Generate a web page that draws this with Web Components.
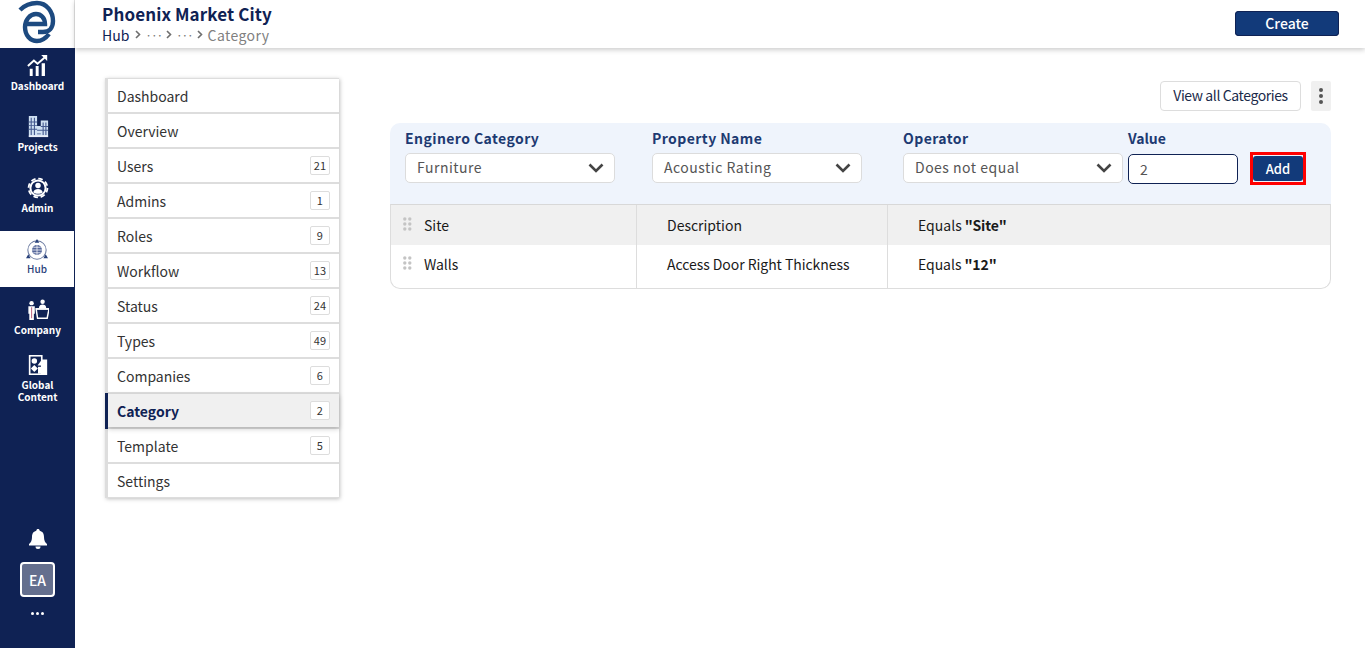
<!DOCTYPE html>
<html lang=en>
<title>Category</title>
<meta charset=utf-8>
<style>
html,body {margin:0; height:100%; overflow:hidden; background:#fff;}
body {font-family:"Noto Sans CJK JP","Liberation Sans",sans-serif; color:#1a1a1a;}
</style>
<app-shell>
  <side-bar slot=side></side-bar>
  <top-bar slot=top title-text="Phoenix Market City"></top-bar>
  <hub-menu slot=menu></hub-menu>
  <category-panel slot=panel></category-panel>
</app-shell>
<script>
const FONT = `"Noto Sans CJK JP","Liberation Sans",sans-serif`;

customElements.define('app-shell', class extends HTMLElement {
    constructor() {
        super();
        this.attachShadow({mode:'open'}).innerHTML = `
        <style>
        :host {display:grid; grid-template-columns:75px 1fr; grid-template-rows:48px 1fr; height:648px; width:1365px;}
        .side {grid-row:1 / 3;}
        .top {position:relative; z-index:2;}
        .body {display:flex; align-items:flex-start; padding:30px 34px 0 30px; gap:51px;}
        </style>
        <div class=side><slot name=side></slot></div>
        <div class=top><slot name=top></slot></div>
        <div class=body><slot name=menu></slot><slot name=panel></slot></div>`;
    }
});

// label, item height, padding-top, icon
const NAV = [
    ['Dashboard', 61, 7, `<path d="M1 12 7.500 6l4 3.500L19 3" fill="none" stroke="#fff" stroke-width="2.200"/><path d="M15.500 0H22v6.500z" fill="#fff"/><path d="M3 15h3.200v8H3zM9.500 12h3.200v11H9.500zM16 9h3.600v14H16z" fill="#fff"/>`],
    ['Projects', 61, 7, `<path d="M2 0h9v23H2zM11 11h4v12h-4zM15 5h8v18h-8z" fill="#cfe0f2"/><path d="M4 2h1.200v19H4zM7.500 2h1.200v19H7.500zM17 7h1.200v14H17zM20 7h1.200v14H20zM2 6h9v1H2zM2 10h9v1H2zM2 14h9v1H2zM15 11h8v1h-8zM15 15h8v1h-8zM11 15h4v1h-4zM11 19h4v1h-4z" fill="#44598f"/><path d="M2 21h21v2H2z" fill="#e9eef8"/>`],
    ['Admin', 61, 7, `<circle cx="12" cy="12" r="10.300" fill="none" stroke="#fff" stroke-width="2" stroke-dasharray="5 3.090"/><circle cx="12" cy="12" r="8.300" fill="none" stroke="#fff" stroke-width="2.200"/><circle cx="12" cy="9.300" r="3" fill="#fff"/><path d="M6.800 16.500c.8-2.500 2.800-3.500 5.200-3.500s4.400 1 5.200 3.500c-2.800 2.200-7.600 2.200-10.400 0z" fill="#fff"/>`],
    ['Hub', 56, 8, `<circle cx="12" cy="12" r="10" fill="none" stroke="#6b7aa0" stroke-width="1.100"/><circle cx="12" cy="12" r="5.500" fill="#54669a"/><path d="M6.500 12h11M12 6.500v11M8 9h8M8 15h8" stroke="#fff" stroke-width=".8"/><path d="M12 0l2.500 4h-5zM0 21l2.500-4.500L5 21zM19 21l2.500-4.500L24 21z" fill="#27407a"/>`],
    ['Company', 61, 12, `<circle cx="5" cy="4.500" r="2.400" fill="#fff"/><path d="M1.500 8h7v8H7.500v7h-5v-7h-1z" fill="#fff"/><path d="M4.400 9h1.200v12H4.400z" fill="#c2708a"/><path d="M10 11h14l-2 10H11.500z" fill="none" stroke="#fff" stroke-width="1.600"/><circle cx="17" cy="3" r="2.400" fill="#fff"/><path d="M13 10c0-3 2-4 4-4s4 1 4 4z" fill="#fff"/><path d="M9.500 10h14.500v1.500H9.500z" fill="#fff"/>`],
    ['Global<br>Content', 0, 6, `<path d="M2 1h15v5h5v17H2z" fill="#fff"/><path d="M3.800 2.800h11.400v18.400H3.800z" fill="#0f2254"/><circle cx="8" cy="7.500" r="3" fill="#fff"/><path d="M8 12l3.800 3.800L8 19.600l-3.800-3.800z" fill="#fff"/><path d="M15.500 7l4 5.500h-8z" fill="#fff"/><path d="M12 14h8.500v7.500H12z" fill="#fff"/>`]
];
customElements.define('side-bar', class extends HTMLElement {
    constructor() {
        super();
        const items = NAV.map(([t,h,p,svg]) => `
            <a class="item ${t=='Hub'?'on':''}" style="padding-top:${p}px;${h?`height:${h}px`:''}">
              <svg width=22 height=22 viewBox="0 0 24 24">${svg}</svg><span>${t}</span></a>`).join('');
        this.attachShadow({mode:'open'}).innerHTML = `
        <style>
        :host {display:flex; flex-direction:column; height:648px; background:#0f2254; color:#fff; font:700 10px/12px ${FONT};}
        .logo {height:48px; background:#fff; border-right:1px solid #e3e3e3; box-sizing:border-box;}
        .logo svg {display:block;}
        .item {display:flex; flex-direction:column; align-items:center; text-align:center; box-sizing:border-box; gap:3px;}
        .item span {display:block;}
        .item.on {background:#fff; color:#27407a; font-weight:500; margin-right:1px; gap:2px;}
        .grow {flex:1;}
        .foot {display:flex; flex-direction:column; align-items:center; padding-bottom:33px;}
        .ea {width:31px; height:31px; margin-top:12px; border:2px solid #fff; border-radius:4px; background:#646f8e; display:flex; align-items:center; justify-content:center; font:500 14px/1 ${FONT};}
        .dots {display:flex; gap:2px; margin-top:15px;}
        .dots i {width:3px; height:3px; border-radius:50%; background:#fff;}
        </style>
        <div class=logo><svg width=74 height=48 viewBox="0 0 74 48" fill="none" stroke="#1d4a80" stroke-width="4.400"><path d="M20 10C25 5 31 3 37 3c10 0 16 9 16 18 0 7-4 11-10 11h-5"/><path d="M27 24h18c0-6-4-10-9-10-6 0-11 6-11 13 0 8 5 14 12 14 5 0 9-3 12-7"/></svg></div>
        ${items}
        <div class=grow></div>
        <div class=foot>
          <svg width=20 height=22 viewBox="0 0 20 22"><path d="M10 1c1 0 1.600.7 1.700 1.700C15 3.500 16 6 16 9c0 3.500 1 5.500 3 7v1.500H1V16c2-1.500 3-3.500 3-7 0-3 1-5.500 4.300-6.300C8.400 1.700 9 1 10 1z" fill="#fff"/><path d="M7.500 18.500h5a2.500 2.500 0 0 1-5 0z" fill="#fff"/></svg>
          <div class=ea>EA</div>
          <div class=dots><i></i><i></i><i></i></div>
        </div>`;
    }
});

customElements.define('top-bar', class extends HTMLElement {
    constructor() {
        super();
        const gt = `<svg width=6 height=9 viewBox="0 0 6 9"><path d="M1 1l3.500 3.500L1 8" fill="none" stroke="#6e6e6e" stroke-width="1.600"/></svg>`;
        this.attachShadow({mode:'open'}).innerHTML = `
        <style>
        :host {display:flex; height:48px; box-sizing:border-box; align-items:center; justify-content:space-between; padding:0 26px 0 27px; background:#fff; box-shadow:0 2px 5px rgba(0,0,0,.2); font-family:${FONT};}
        .txt {margin-top:-2px;}
        h1 {margin:0; font:700 17px/22px ${FONT}; letter-spacing:.1px; color:#0f2254;}
        .crumb {display:flex; align-items:center; gap:4px; font:400 14px/18px ${FONT}; color:#0f2254; margin-top:1px;}
        .crumb .d {color:#777; font-size:12px; letter-spacing:-1.200px;}
        .crumb .c {color:#808080; letter-spacing:.4px; margin-left:1px;}
        .crumb svg:first-of-type {margin-left:2px;}
        button {width:104px; height:25px; margin-top:-1px; border:0; border-radius:4px; background:#123a7a; color:#fff; font:500 14px/25px ${FONT}; padding:0; box-shadow:0 0 0 1px #0f2254 inset;}
        </style>
        <div class=txt><h1>${this.getAttribute('title-text')}</h1>
        <div class=crumb><span>Hub</span>${gt}<span class=d>···</span>${gt}<span class=d>···</span>${gt}<span class=c>Category</span></div></div>
        <button>Create</button>`;
    }
});

customElements.define('menu-row', class extends HTMLElement {
    constructor() {
        super();
        const n = this.getAttribute('count');
        this.attachShadow({mode:'open'}).innerHTML = `
        <style>
        :host {display:flex; height:33px; align-items:center; justify-content:space-between; padding:0 9px 0 9px; background:#fff; font:400 14px/20px ${FONT}; color:#333; position:relative;}
        :host([active]) {background:#f0f0f0; font-weight:700; color:#0f2254; box-shadow:0 2px 5px rgba(0,0,0,.2); z-index:1;}
        :host([active])::before {content:""; position:absolute; left:-3px; top:-1px; bottom:-2px; width:3px; background:#0f2254;}
        b {display:block; min-width:20px; height:19px; box-sizing:border-box; padding:0 2px; border:1px solid #ddd; border-radius:2px; background:#fff; text-align:center; font:400 11px/17px ${FONT}; letter-spacing:.2px; color:#333;}
        </style>
        <span><slot></slot></span>${n ? `<b>${n}</b>` : ''}`;
    }
});

customElements.define('hub-menu', class extends HTMLElement {
    constructor() {
        super();
        const rows = [['Dashboard'],['Overview'],['Users',21],['Admins',1],['Roles',9],['Workflow',13],['Status',24],['Types',49],['Companies',6],['Category',2,1],['Template',5],['Settings']];
        this.attachShadow({mode:'open'}).innerHTML = `
        <style>
        :host {display:flex; flex-direction:column; gap:2px; width:234px; box-sizing:border-box; border-left:3px solid #ddd; background:#ddd; box-shadow:1px 1px 4px rgba(0,0,0,.25); padding:1px 0;}
        </style>
        ${rows.map(([t,n,a]) => `<menu-row ${n?`count="${n}"`:''} ${a?'active':''}>${t}</menu-row>`).join('')}`;
    }
});

customElements.define('filter-select', class extends HTMLElement {
    constructor() {
        super();
        this.attachShadow({mode:'open'}).innerHTML = `
        <style>
        :host {display:block; width:var(--w,210px);}
        label {display:block; font:700 14px/18px ${FONT}; letter-spacing:.42px; color:#1d3a72; height:20px; margin-bottom:4px;}
        .box {height:30px; box-sizing:border-box; display:flex; align-items:center; justify-content:space-between; padding:0 10px 0 11px; background:#fff; border:1px solid #dcdcdc; border-radius:5px; font:400 14px/18px ${FONT}; letter-spacing:.5px; color:#555;}
        .box span {margin-top:-2px;}
        </style>
        <label>${this.getAttribute('label')}</label>
        <div class=box><span>${this.getAttribute('value')}</span>
        <svg width=16 height=10 viewBox="0 0 16 10"><path d="M1.500 1.500 8 8l6.500-6.500" fill="none" stroke="#444" stroke-width="2.600"/></svg></div>`;
    }
});

customElements.define('category-panel', class extends HTMLElement {
    constructor() {
        super();
        const grip = `<svg width=9 height=14 viewBox="0 0 9 14" fill="#c4c4c4"><circle cx="1.800" cy="2" r="1.700"/><circle cx="6.800" cy="2" r="1.700"/><circle cx="1.800" cy="7" r="1.700"/><circle cx="6.800" cy="7" r="1.700"/><circle cx="1.800" cy="12" r="1.700"/><circle cx="6.800" cy="12" r="1.700"/></svg>`;
        this.attachShadow({mode:'open'}).innerHTML = `
        <style>
        :host {display:block; width:941px; margin-top:3px; font-family:${FONT};}
        .tools {display:flex; justify-content:flex-end; gap:10px; height:30px; margin-bottom:12px;}
        .view {width:141px; height:30px; box-sizing:border-box; border:1px solid #ddd; border-radius:4px; background:#fff; font:400 14px/20px ${FONT}; letter-spacing:-.4px; color:#1a2a4a; padding:0 0 2px;}
        .more {width:20px; height:30px; background:#f0f0f0; border-radius:2px; display:flex; flex-direction:column; align-items:center; justify-content:center; gap:2px;}
        .more i {width:4px; height:4px; border-radius:50%; background:#555;}
        .filters {height:81px; box-sizing:border-box; background:#eff4fc; border-radius:10px 10px 0 0; padding:6px 0 0 15px; display:flex; align-items:flex-start;}
        filter-select:nth-child(1) {margin-right:37px;}
        filter-select:nth-child(2) {margin-right:41px;}
        filter-select:nth-child(3) {margin-right:5px; --w:220px;}
        .val {width:110px;}
        .val label {display:block; font:700 14px/18px ${FONT}; color:#1d3a72; height:20px; margin-bottom:5px;}
        .val div {height:30px; box-sizing:border-box; border:1px solid #0f2254; border-radius:5px; background:#fff; padding:0 11px; font:400 14px/29px ${FONT}; color:#555;}
        .add {margin:23px 0 0 12px; width:56px; height:33px; box-sizing:border-box; border:3px solid #f00; background:#eff4fc; padding:1px 0;}
        .add button {display:block; width:100%; height:100%; border:0; border-radius:3px; background:#123a7a; color:#fff; font:500 13px/23px ${FONT}; padding:0;}
        .table {border:1px solid #ddd; border-top:1px solid #d8d8d8; border-radius:0 0 10px 10px; overflow:hidden;}
        .row {display:grid; grid-template-columns:245px 251px 1fr; color:#1a1a1a; font:400 14px/20px ${FONT};}
        .row.h {background:#f0f0f0; height:40px;}
        .row.w {height:43px;}
        .row > div {display:flex; align-items:center; box-sizing:border-box; height:100%;}
        .row > div + div {border-left:1px solid #ddd; padding-left:30px;}
        .row.w > div {padding-bottom:5px; letter-spacing:-.05px;}
        .row > div:first-child {padding-left:12px; gap:12px;}
        .row svg {margin-top:-2px;}
        strong {font-weight:700; margin-left:3px; letter-spacing:-.1px;}
        </style>
        <div class=tools><button class=view>View all Categories</button><div class=more><i></i><i></i><i></i></div></div>
        <div class=filters>
          <filter-select label="Enginero Category" value="Furniture"></filter-select>
          <filter-select label="Property Name" value="Acoustic Rating"></filter-select>
          <filter-select label="Operator" value="Does not equal"></filter-select>
          <div class=val><label>Value</label><div>2</div></div>
          <div class=add><button>Add</button></div>
        </div>
        <div class=table>
          <div class="row h"><div>${grip}<span>Site</span></div><div>Description</div><div>Equals <strong>"Site"</strong></div></div>
          <div class="row w"><div>${grip}<span>Walls</span></div><div>Access Door Right Thickness</div><div>Equals <strong>"12"</strong></div></div>
        </div>`;
    }
});
</script>
